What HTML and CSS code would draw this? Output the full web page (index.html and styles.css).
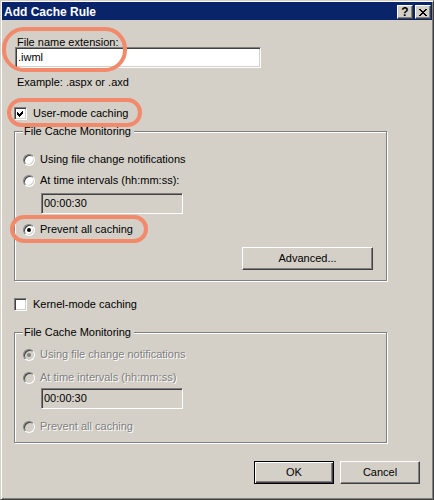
FILE: index.html
```html
<!DOCTYPE html>
<html>
<head>
<meta charset="utf-8">
<link rel="stylesheet" href="styles.css">
</head>
<body>
<div class="window">
  <div class="caption">
    <span class="title">Add Cache Rule</span>
    <div class="caption-buttons">
      <span class="cbtn help">?</span>
      <span class="cbtn close">
        <svg width="8" height="7" viewBox="0 0 8 7" shape-rendering="crispEdges">
          <rect x="0" y="0" width="2" height="1"/><rect x="6" y="0" width="2" height="1"/>
          <rect x="1" y="1" width="2" height="1"/><rect x="5" y="1" width="2" height="1"/>
          <rect x="2" y="2" width="4" height="1"/>
          <rect x="3" y="3" width="2" height="1"/>
          <rect x="2" y="4" width="4" height="1"/>
          <rect x="1" y="5" width="2" height="1"/><rect x="5" y="5" width="2" height="1"/>
          <rect x="0" y="6" width="2" height="1"/><rect x="6" y="6" width="2" height="1"/>
        </svg>
      </span>
    </div>
  </div>
  <div class="body">
    <div class="label">File name extension:</div>
    <div class="textbox ext">.iwml</div>
    <div class="hint">Example: .aspx or .axd</div>
    <div class="check-row user">
      <span class="checkbox">
        <svg width="9" height="9" viewBox="0 0 9 9" shape-rendering="crispEdges">
          <polygon points="1,3 3,5 7,1 7,4 3,8 1,6"/>
        </svg>
      </span>
      <span>User-mode caching</span>
    </div>
    <fieldset class="group g1">
      <legend>File Cache Monitoring</legend>
      <div class="radio-row r1"><span class="radio"></span><span>Using file change notifications</span></div>
      <div class="radio-row r2"><span class="radio"></span><span>At time intervals (hh:mm:ss):</span></div>
      <div class="textbox ro t1">00:00:30</div>
      <div class="radio-row r3"><span class="radio checked"></span><span>Prevent all caching</span></div>
      <div class="adv-row"><div class="btn adv">Advanced...</div></div>
    </fieldset>
    <div class="check-row kernel">
      <span class="checkbox"></span>
      <span>Kernel-mode caching</span>
    </div>
    <fieldset class="group g2">
      <legend>File Cache Monitoring</legend>
      <div class="radio-row r1 disabled"><span class="radio checked"></span><span>Using file change notifications</span></div>
      <div class="radio-row r2 disabled"><span class="radio"></span><span>At time intervals (hh:mm:ss)</span></div>
      <div class="textbox ro t2">00:00:30</div>
      <div class="radio-row r3 disabled"><span class="radio"></span><span>Prevent all caching</span></div>
    </fieldset>
    <div class="dialog-buttons">
      <div class="btn default">OK</div>
      <div class="btn">Cancel</div>
    </div>
  </div>
  <div class="note n1"></div>
  <div class="note n2"></div>
  <div class="note n3"></div>
</div>
</body>
</html>
```
FILE: styles.css
```css
body {
  margin: 0;
  background: #d4d0c8;
  font: 11px/13px "Liberation Sans", Arial, sans-serif;
  color: #000;
}

.window {
  position: relative;
  width: 434px;
  height: 500px;
  box-sizing: border-box;
  padding: 1px;
  border: 1px solid;
  border-color: #d4d0c8 #404040 #404040 #d4d0c8;
  box-shadow: inset 1px 1px #fff, inset -1px -1px #808080;
  background: #d4d0c8;
  display: flex;
  flex-direction: column;
}

.caption {
  height: 18px;
  flex: none;
  background: #0a246a;
  color: #fff;
  display: flex;
  align-items: flex-start;
  justify-content: space-between;
}

.title {
  font-weight: bold;
  font-size: 12px;
  padding: 2px 0 0 2px;
  line-height: 16px;
}

.caption-buttons {
  display: flex;
  gap: 2px;
  margin: 3px 1px 0 0;
}

.cbtn {
  width: 16px;
  height: 14px;
  box-sizing: border-box;
  border: 1px solid;
  border-color: #fff #404040 #404040 #fff;
  box-shadow: inset -1px -1px #808080;
  background: #d4d0c8;
  color: #000;
  display: flex;
  align-items: center;
  justify-content: center;
}

.cbtn.help {
  font-weight: bold;
  font-size: 12px;
  line-height: 12px;
}

.cbtn svg { fill: #000; display: block; }

.body {
  flex: 1;
  padding: 0 12px;
  display: flex;
  flex-direction: column;
  align-items: flex-start;
}

.label { margin: 16px 0 -2px 3px; }

.textbox {
  height: 21px;
  box-sizing: border-box;
  border: 1px solid;
  border-color: #808080 #fff #fff #808080;
  box-shadow: inset 1px 1px #404040, inset -1px -1px #d4d0c8;
  background: #fff;
  padding: 0 2px;
  line-height: 19px;
}

.textbox.ext { margin-left: 1px; width: 246px; }

.textbox.ro {
  width: 142px;
  background: #d4d0c8;
  margin-left: 18px;
}

.t1 { margin-top: 6px; }
.t2 { margin-top: 4px; }

.hint { margin: 8px 0 0 3px; }

.check-row {
  display: flex;
  align-items: center;
  gap: 6px;
  height: 13px;
}

.check-row.user { margin-top: 18px; }
.check-row.kernel { margin-top: 17px; }

.checkbox {
  width: 13px;
  height: 13px;
  box-sizing: border-box;
  border: 1px solid;
  border-color: #808080 #fff #fff #808080;
  box-shadow: inset 1px 1px #404040, inset -1px -1px #d4d0c8;
  background: #fff;
  display: flex;
  align-items: center;
  justify-content: center;
  flex: none;
}

.checkbox svg { fill: #000; display: block; }

.group {
  margin: 0;
  width: 373px;
  box-sizing: border-box;
  border: 1px solid #808080;
  box-shadow: inset 1px 1px #fff, 1px 1px #fff;
  min-width: 0;
}

.group legend {
  padding: 0 3px 0 1px;
  margin: 0;
  line-height: 13px;
  background: #d4d0c8;
  position: relative;
}

.g1 { margin-top: 5px; padding: 0 13px 10px 8px; }
.g2 { margin-top: 15px; padding: 0 13px 9px 8px; }

.radio-row {
  display: flex;
  align-items: center;
  gap: 5px;
  height: 13px;
}

.g1 .r1 { margin-top: 15px; }
.g1 .r2 { margin-top: 8px; }
.g1 .r3 { margin-top: 9px; }

.g2 .r1 { margin-top: 9px; }
.g2 .r2 { margin-top: 10px; }
.g2 .r3 { margin-top: 11px; }

.radio {
  width: 12px;
  height: 12px;
  box-sizing: border-box;
  border-radius: 50%;
  border: 1px solid;
  border-color: #808080 #fff #fff #808080;
  box-shadow: inset 1px 1px #404040, inset -1px -1px #d4d0c8;
  background: #fff;
  display: flex;
  align-items: center;
  justify-content: center;
  flex: none;
}

.radio.checked::after {
  content: "";
  width: 4px;
  height: 4px;
  border-radius: 50%;
  background: #000;
}

.disabled { color: #808080; }
.disabled span:last-child { text-shadow: 1px 1px 0 #fff; }
.disabled .radio { background: #d4d0c8; }
.disabled .radio.checked::after { background: #808080; }

.adv-row {
  display: flex;
  justify-content: flex-end;
  margin-top: 11px;
}

.btn {
  width: 80px;
  height: 23px;
  box-sizing: border-box;
  border: 1px solid;
  border-color: #fff #404040 #404040 #fff;
  box-shadow: inset -1px -1px #808080;
  background: #d4d0c8;
  display: flex;
  align-items: center;
  justify-content: center;
}

.btn.adv { width: 131px; }

.btn.default {
  border: 1px solid #000;
  box-shadow: inset 1px 1px #fff, inset -1px -1px #404040, inset -2px -2px #808080;
}

.dialog-buttons {
  align-self: stretch;
  display: flex;
  justify-content: flex-end;
  gap: 6px;
  margin-top: 18px;
}

.note {
  position: absolute;
  box-sizing: border-box;
  border: 4px solid #f2896b;
  pointer-events: none;
}

.n1 { left: 1px; top: 26px; width: 125px; height: 45px; border-radius: 22px; }
.n2 { left: 6px; top: 97px; width: 135px; height: 29px; border-radius: 15px; }
.n3 { left: 9px; top: 214px; width: 138px; height: 28px; border-radius: 14px; }
```
